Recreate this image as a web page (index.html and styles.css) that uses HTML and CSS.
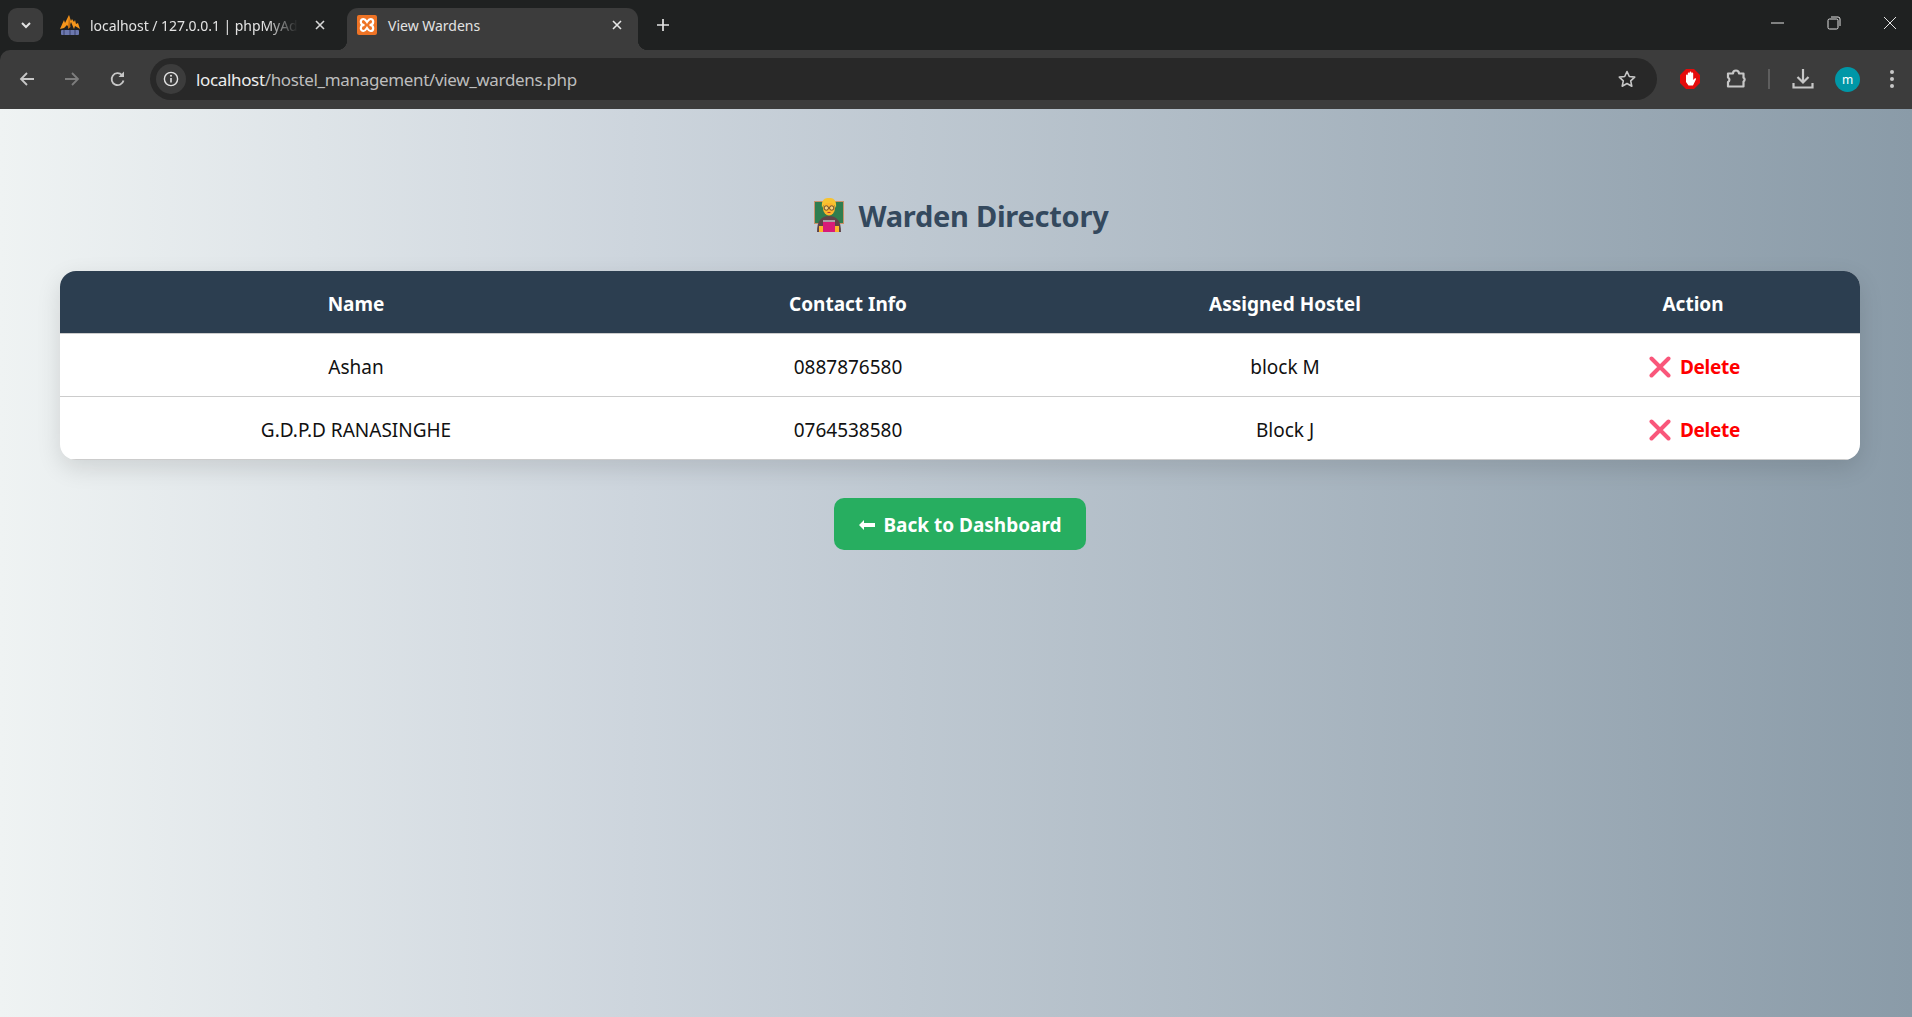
FILE: index.html
```html
<!DOCTYPE html>
<html>
    <head>
        <meta charset="UTF-8" />
        <title>View Wardens</title>
        <link rel="stylesheet" href="styles.css">
    </head>

    <body>
        <div class="tabstrip">
            <div class="tab-search">
                <svg width="12" height="12" viewBox="0 0 12 12"><path d="M2 4l4 4 4-4" fill="none" stroke="#e3e3e3" stroke-width="2"/></svg>
            </div>
            <div class="tab">
                <svg class="favicon" width="20" height="20" viewBox="0 0 20 20">
                    <path d="M0 14L4 5l1 3 4-8 2 6 1-2 2 3 1-2 1 4 2-1 2 6-5-3-1 3-3-7-2 6-2-3-3 3z" fill="#f6961c"/>
                    <path d="M9 0l1.500 12L8 14z" fill="#c66d0c"/>
                    <rect x="1" y="15" width="18" height="5" rx="1" fill="#6c78af"/>
                    <path d="M4 15v5M10 15v5M15 15v5" stroke="#39406a" stroke-width="1"/>
                </svg>
                <span class="tab-title fade">localhost / 127.0.0.1 | phpMyAd</span>
                <svg class="tab-close" width="12" height="12" viewBox="0 0 12 12"><path d="M2 2l8 8M10 2l-8 8" stroke="#d8d8d8" stroke-width="1.6"/></svg>
            </div>
            <div class="tab active">
                <svg class="favicon" width="20" height="20" viewBox="0 0 20 20">
                    <rect width="20" height="20" rx="2" fill="#ee7325"/>
                    <path d="M7.500 10C5 10 3.800 8.600 3.800 6.800S5 4 6.500 4 9 5.500 10 7c1-1.500 2-3 3.500-3s2.700 1 2.700 2.800S15 10 12.500 10c2.500 0 3.700 1.400 3.700 3.200S15 16 13.500 16 11 14.500 10 13c-1 1.500-2 3-3.500 3s-2.700-1-2.700-2.800S5 10 7.500 10z" fill="none" stroke="#fff" stroke-width="2.200"/>
                </svg>
                <span class="tab-title">View Wardens</span>
                <svg class="tab-close" width="12" height="12" viewBox="0 0 12 12"><path d="M2 2l8 8M10 2l-8 8" stroke="#e8e8e8" stroke-width="1.6"/></svg>
            </div>
            <svg class="new-tab" width="14" height="14" viewBox="0 0 14 14"><path d="M7 1v12M1 7h12" stroke="#e3e3e3" stroke-width="1.7"/></svg>
            <div class="window-btns">
                <svg width="14" height="14" viewBox="0 0 14 14"><path d="M0 7h13" stroke="#e3e3e3" stroke-width="1"/></svg>
                <svg width="14" height="14" viewBox="0 0 14 14"><rect x="1" y="3" width="10" height="10" rx="1.5" fill="none" stroke="#e3e3e3"/><path d="M4 1h7a2 2 0 0 1 2 2v7" fill="none" stroke="#e3e3e3"/></svg>
                <svg width="14" height="14" viewBox="0 0 14 14"><path d="M1 1l12 12M13 1L1 13" stroke="#e3e3e3" stroke-width="1"/></svg>
            </div>
        </div>

        <div class="toolbar">
            <svg class="nav-icon" width="18" height="18" viewBox="0 0 18 18"><path d="M16 9H3M9 3L3 9l6 6" fill="none" stroke="#c7c7c7" stroke-width="1.8"/></svg>
            <svg class="nav-icon" width="18" height="18" viewBox="0 0 18 18"><path d="M2 9h13M9 3l6 6-6 6" fill="none" stroke="#7d7d7d" stroke-width="1.8"/></svg>
            <svg class="nav-icon" width="18" height="18" viewBox="0 0 18 18"><path d="M14.500 10.500A6 6 0 1 1 13 5" fill="none" stroke="#c7c7c7" stroke-width="1.800"/><path d="M15 1.500V7H9.500z" fill="#c7c7c7"/></svg>
            <div class="omnibox">
                <div class="site-info">
                    <svg width="16" height="16" viewBox="0 0 16 16"><circle cx="8" cy="8" r="6.600" fill="none" stroke="#e3e3e3" stroke-width="1.400"/><path d="M8 7v4.500" stroke="#e3e3e3" stroke-width="1.600"/><circle cx="8" cy="4.800" r="1" fill="#e3e3e3"/></svg>
                </div>
                <span class="url"><span class="url-host">localhost</span>/hostel_management/view_wardens.php</span>
                <svg class="star" width="20" height="20" viewBox="0 0 20 20"><path d="M10 2.500l2.300 5 5.400.6-4 3.700 1.100 5.400-4.800-2.700-4.800 2.700 1.100-5.400-4-3.700 5.400-.6z" fill="none" stroke="#c7c7c7" stroke-width="1.600" stroke-linejoin="round"/></svg>
            </div>
            <div class="toolbar-right">
                <svg width="22" height="22" viewBox="0 0 22 22">
                    <path d="M7 1h8l6 6v8l-6 6H7l-6-6V7z" fill="#e40b0b"/>
                    <path d="M7 10.500V7.500a.9.900 0 0 1 1.800 0V5.500a.9.900 0 0 1 1.800 0V4.500a.9.900 0 0 1 1.800 0v1a.9.900 0 0 1 1.800 0V12l1.400-1.500c1-.8 1.900.2 1.300 1L14 17.500H9.500L7 14z" fill="#fff"/>
                </svg>
                <svg width="22" height="22" viewBox="0 0 22 22"><path d="M3 5.500h5a3 3 0 0 1 6 0h4.500v4.300a2 2 0 0 1 0 3.600v5.100H3v-4.500a2.500 2.500 0 0 0 0-4.500z" fill="none" stroke="#c7c7c7" stroke-width="2.200" stroke-linejoin="round"/></svg>
                <span class="toolbar-sep"></span>
                <svg width="22" height="22" viewBox="0 0 22 22"><path d="M11 1v13M5.500 9l5.500 5.500L16.500 9M1.500 15v4.500h19V15" fill="none" stroke="#c7c7c7" stroke-width="2.200"/></svg>
                <span class="avatar">m</span>
                <svg class="menu-dots" width="6" height="20" viewBox="0 0 6 20"><circle cx="3" cy="3" r="2" fill="#c7c7c7"/><circle cx="3" cy="10" r="2" fill="#c7c7c7"/><circle cx="3" cy="17" r="2" fill="#c7c7c7"/></svg>
            </div>
        </div>

        <div class="page">
            <h2 class="page-title">
                <svg width="30" height="34" viewBox="0 0 30 34">
                    <rect x="0.500" y="3.500" width="29" height="22" fill="#2f7d4f" stroke="#c9926a"/>
                    <path d="M3 34c0-11 4-16 12-16s12 5 12 16z" fill="#5f4349"/>
                    <rect x="9" y="22" width="12" height="2" fill="#a9a0a6"/>
                    <rect x="9" y="24" width="12" height="10" fill="#d81b78"/>
                    <rect x="5" y="28" width="4" height="6" fill="#fdb52b"/>
                    <rect x="21" y="28" width="4" height="6" fill="#fdb52b"/>
                    <ellipse cx="15" cy="10" rx="6" ry="7.500" fill="#fdb52b"/>
                    <path d="M8 10C7 1 11 0 15 0s8 1 7 10c-1-3-3-5-7-5s-6 2-7 5z" fill="#f7c331"/>
                    <circle cx="12.300" cy="10" r="2.200" fill="#fcd27a" stroke="#6b4a2a"/>
                    <circle cx="17.700" cy="10" r="2.200" fill="#fcd27a" stroke="#6b4a2a"/>
                    <path d="M13.500 14.500h3" stroke="#b23a3a"/>
                </svg>
                Warden Directory
            </h2>

            <table class="warden-table">
                <colgroup>
                    <col class="col-name">
                    <col class="col-contact">
                    <col class="col-hostel">
                    <col class="col-action">
                </colgroup>
                <thead>
                    <tr>
                        <th>Name</th>
                        <th>Contact Info</th>
                        <th>Assigned Hostel</th>
                        <th>Action</th>
                    </tr>
                </thead>
                <tbody>
                    <tr>
                        <td>Ashan</td>
                        <td>0887876580</td>
                        <td>block M</td>
                        <td>
                            <a class="delete-link" href="#">
                                <svg width="22" height="22" viewBox="0 0 22 22"><path d="M2.500 2.500l17 17M19.500 2.500l-17 17" stroke="#f9567a" stroke-width="4" stroke-linecap="round"/></svg>
                                Delete
                            </a>
                        </td>
                    </tr>
                    <tr>
                        <td>G.D.P.D RANASINGHE</td>
                        <td>0764538580</td>
                        <td>Block J</td>
                        <td>
                            <a class="delete-link" href="#">
                                <svg width="22" height="22" viewBox="0 0 22 22"><path d="M2.500 2.500l17 17M19.500 2.500l-17 17" stroke="#f9567a" stroke-width="4" stroke-linecap="round"/></svg>
                                Delete
                            </a>
                        </td>
                    </tr>
                </tbody>
            </table>

            <a class="back-btn" href="#">
                <svg width="18" height="12" viewBox="0 0 18 12"><path d="M6 1L1 6l5 5V8h11V4H6z" fill="#fff"/></svg>
                Back to Dashboard
            </a>
        </div>
    </body>
</html>
```

FILE: styles.css
```css
* {
    margin: 0;
    padding: 0;
    box-sizing: border-box;
}

html,
body {
    height: 100%;
}

body {
    display: flex;
    flex-direction: column;
    overflow: hidden;
    background-color: #1f2121;
    font-family: "Noto Sans", "Open Sans", sans-serif;
}

/* Browser chrome */
.tabstrip {
    display: flex;
    align-items: flex-end;
    height: 50px;
    padding-left: 8px;
    color: #e3e3e3;
    font-size: 14px;
}

.tab-search {
    display: flex;
    align-items: center;
    justify-content: center;
    align-self: flex-start;
    width: 35px;
    height: 34px;
    margin-top: 8px;
    background-color: #3c3c3c;
    border-radius: 9px;
}

.tab {
    position: relative;
    display: flex;
    align-items: center;
    width: 295px;
    height: 42px;
    margin-left: 4px;
    padding: 0 16px 8px 13px;
    border-radius: 11px 11px 0 0;
}

.tab.active {
    width: 291px;
    margin-left: 5px;
    padding: 0 15px 8px 10px;
    background-color: #3c3c3c;
}

/* flared bottom corners of the selected tab */
.tab.active::before,
.tab.active::after {
    content: "";
    position: absolute;
    bottom: 0;
    width: 10px;
    height: 10px;
}

.tab.active::before {
    left: -10px;
    background: radial-gradient(circle at 0 0, transparent 10px, #3c3c3c 10.500px);
}

.tab.active::after {
    right: -10px;
    background: radial-gradient(circle at 100% 0, transparent 10px, #3c3c3c 10.500px);
}

.favicon {
    flex: none;
    margin-right: 10px;
}

.tab.active .favicon {
    margin-right: 11px;
}

.tab-title {
    flex: 1;
    white-space: nowrap;
}

.tab-title.fade {
    margin-right: 16px;
    letter-spacing: -0.05px;
    -webkit-mask-image: linear-gradient(to right, #000 85%, transparent);
    mask-image: linear-gradient(to right, #000 85%, transparent);
}

.tab-close {
    flex: none;
}

.new-tab {
    align-self: center;
    margin-left: 18px;
}

.window-btns {
    display: flex;
    align-self: flex-start;
    gap: 42px;
    margin: 16px 15px 0 auto;
}

.toolbar {
    display: flex;
    align-items: center;
    height: 59px;
    padding: 0 0 1px 18px;
    background-color: #3c3c3c;
    border-top-left-radius: 10px;
}

.nav-icon {
    margin-right: 27px;
}

.nav-icon:nth-child(2) {
    margin-right: 28px;
}

.omnibox {
    display: flex;
    align-items: center;
    width: 1507px;
    height: 42px;
    margin-left: -4px;
    padding: 0 20px 0 6px;
    background-color: #282828;
    border-radius: 21px;
}

.site-info {
    display: flex;
    align-items: center;
    justify-content: center;
    width: 30px;
    height: 30px;
    margin-right: 10px;
    background-color: #3c3c3c;
    border-radius: 50%;
}

.url {
    flex: 1;
    color: #bdbdbd;
    font-size: 17px;
    letter-spacing: -0.35px;
}

.url-host {
    color: #ededed;
}

.toolbar-right {
    display: flex;
    align-items: center;
    flex: 1;
    gap: 24px;
    padding-left: 22px;
}

.toolbar-sep {
    width: 2px;
    height: 20px;
    margin: 0 -2px 0 -3px;
    background-color: #5e5e5e;
}

.avatar {
    display: flex;
    align-items: center;
    justify-content: center;
    width: 25px;
    height: 25px;
    margin-left: -3px;
    background-color: #0097a7;
    border-radius: 50%;
    color: #fff;
    font-size: 12px;
}

.menu-dots {
    margin-left: 5px;
}

/* Page */
.page {
    flex: 1;
    display: flex;
    flex-direction: column;
    align-items: center;
    padding: 0 52px 0 60px;
    background: linear-gradient(to right, #eff3f3 0%, #cdd5dd 33%, #8a9ba8 100%);
}

.page-title {
    display: flex;
    align-items: center;
    gap: 14px;
    margin-top: 85px;
    margin-bottom: 35px;
    margin-left: 3px;
    height: 42px;
    color: #34495e;
    font-size: 29px;
    font-weight: 700;
    letter-spacing: -0.25px;
}

.warden-table {
    width: 1800px;
    border-collapse: separate;
    border-spacing: 0;
    overflow: hidden;
    background-color: #fff;
    border-radius: 16px;
    box-shadow: 0 8px 24px rgba(0, 0, 0, 0.12);
    table-layout: fixed;
    font-size: 19px;
}

.col-name { width: 592px; }
.col-contact { width: 392px; }
.col-hostel { width: 482px; }
.col-action { width: 334px; }

.warden-table th,
.warden-table td {
    height: 63px;
    padding-top: 3px;
    text-align: center;
    vertical-align: middle;
    border-bottom: 1px solid #ccc;
}

.warden-table th {
    background-color: #2c3e50;
    color: #fff;
    font-size: 19px;
    font-weight: 700;
}

.warden-table td {
    color: #111;
}

.delete-link {
    display: inline-flex;
    align-items: center;
    gap: 9px;
    margin-left: 3px;
    padding-top: 4px;
    color: #f00;
    font-weight: 700;
    letter-spacing: -0.3px;
    text-decoration: none;
}

.back-btn {
    display: flex;
    align-items: center;
    gap: 7px;
    margin-top: 38px;
    height: 52px;
    padding: 2px 24px 0;
    background-color: #27ae60;
    border-radius: 10px;
    color: #fff;
    font-size: 19px;
    font-weight: 700;
    text-decoration: none;
}
```
